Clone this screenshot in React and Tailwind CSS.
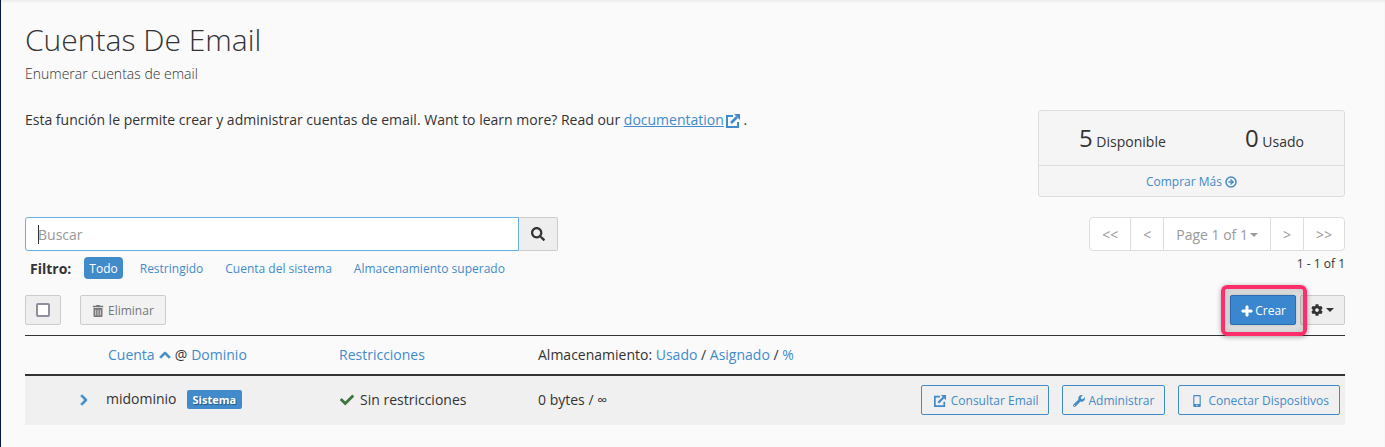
import React from 'react'
import {
  FaCheck,
  FaChevronRight,
  FaChevronUp,
  FaCog,
  FaMobileAlt,
  FaPlus,
  FaSearch,
  FaTrashAlt,
  FaWrench
} from 'react-icons/fa'
import { CircleArrowRight } from 'lucide-react'

const filters = ['Todo', 'Restringido', 'Cuenta del sistema', 'Almacenamiento superado']

const accounts = [
  { name: 'midominio', system: true, restrictions: 'Sin restricciones', used: '0 bytes', quota: '∞' }
]

function ExternalIcon({ className }) {
  return (
    <svg viewBox="0 0 14 14" className={className} fill="none" stroke="currentColor" strokeWidth="2" aria-hidden="true">
      <path d="M7 2H1V13H12V8" />
      <path d="M5 9L11 3" strokeWidth="2.6" />
      <path d="M8 0H14V6Z" fill="currentColor" stroke="none" />
    </svg>
  )
}

function Caret() {
  return (
    <svg viewBox="0 0 8 4" className="h-1 w-2" fill="currentColor" aria-hidden="true">
      <path d="M0 0H8L4 4Z" />
    </svg>
  )
}

/**
 * Available / used account counters
 */
function StatsBox() {
  return (
    <div className="w-[307px] shrink-0 rounded-[3px] border border-[#ddd] bg-[#f5f5f5]">
      <div className="flex h-[55px] items-center justify-between border-b border-[#ddd] px-10">
        <p><span className="text-2xl">5</span> Disponible</p>
        <p><span className="text-2xl">0</span> Usado</p>
      </div>
      <div className="flex h-[30px] items-center justify-center pt-px">
        <a href="#comprar" className="flex items-center gap-[3px] text-xs text-[#428bca]">
          Comprar Más
          <CircleArrowRight className="h-3 w-3" strokeWidth={3} />
        </a>
      </div>
    </div>
  )
}

function Pager() {
  return (
    <div className="flex flex-col items-end">
      <div className="flex h-[34px] divide-x divide-[#ddd] rounded-[4px] border border-[#ddd] bg-white text-[#999]">
        <button className="px-3 pt-0.5">&lt;&lt;</button>
        <button className="px-3 pt-0.5">&lt;</button>
        <button className="flex items-center gap-0.5 px-3 pt-0.5">
          Page 1 of 1
          <Caret />
        </button>
        <button className="px-3 pt-0.5">&gt;</button>
        <button className="px-3 pt-0.5">&gt;&gt;</button>
      </div>
      <p className="mt-[5px] text-xs leading-4">1 - 1 of 1</p>
    </div>
  )
}

function SearchBar() {
  return (
    <div className="w-[533px] max-w-full">
      <div className="relative flex h-[34px]">
        <input
          type="text"
          aria-label="Buscar"
          placeholder="Buscar"
          className="min-w-0 flex-1 rounded-l-[3px] border border-[#66afe9] bg-white px-3 pt-0.5 outline-none placeholder:text-[#999]"
        />
        {/* Text cursor */}
        <span className="absolute left-[13px] top-2 h-[19px] w-px bg-[#333]" />
        <button
          aria-label="Iniciar búsqueda"
          className="flex w-[39px] items-center justify-center rounded-r-[2px] border border-l-0 border-[#ccc] bg-[#eee]"
        >
          <FaSearch className="h-3.5 w-3.5" />
        </button>
      </div>
      <div className="mt-1.5 flex items-center pl-[5px]">
        <span className="mr-[13px] pt-0.5 font-bold">Filtro:</span>
        <div className="flex gap-3">
          {filters.map((filter, i) => (
            <button
              key={filter}
              className={
                i === 0
                  ? 'h-[22px] rounded-[4px] bg-[#428bca] px-[5px] pt-px text-xs text-white'
                  : 'h-[22px] px-[5px] pt-px text-xs text-[#428bca]'
              }
            >
              {filter}
            </button>
          ))}
        </div>
      </div>
    </div>
  )
}

function Toolbar() {
  return (
    <div className="mt-4 flex h-[30px] items-stretch">
      <label className="flex w-9 items-center justify-center rounded-[2px] border border-[#ccc] bg-[#eee]">
        <input
          type="checkbox"
          aria-label="Seleccionar todo"
          className="h-3.5 w-3.5 appearance-none rounded-[2px] border-2 border-[#8f8f9d] bg-white"
        />
      </label>
      <button className="ml-[19px] flex items-center gap-1 rounded-[2px] border border-[#ccc] bg-[#f2f2f2] px-[11px] pt-px text-xs text-[#777]">
        <FaTrashAlt className="h-3 w-3" />
        Eliminar
      </button>
      <div className="ml-auto flex gap-1">
        <div className="relative flex">
          {/* Highlight frame around the create button */}
          <div className="pointer-events-none absolute -bottom-[11px] -left-[9px] -right-[11px] -top-[10px] z-10 rounded-[6px] border-4 border-[#ff2d6b] shadow-[0_1px_5px_rgba(0,0,0,0.35),inset_0_0_6px_4px_rgba(0,0,0,0.18)]" />
          <button className="z-20 flex items-center gap-0.5 rounded-[2px] border border-[#2a6db0] bg-[#3a87cf] pl-2.5 pr-[9px] pt-px text-xs text-white shadow-[0_0_4px_rgba(0,0,0,0.3)]">
            <FaPlus className="h-3 w-3" stroke="currentColor" strokeWidth="30" />
            Crear
          </button>
        </div>
        <button
          aria-label="Configuración"
          className="flex w-[45px] items-center justify-center gap-[3px] rounded-[2px] border border-[#ccc] bg-[#eee]"
        >
          <FaCog className="h-3 w-3" />
          <Caret />
        </button>
      </div>
    </div>
  )
}

function ActionButton({ icon, children }) {
  return (
    <button className="flex h-[30px] items-center gap-[3px] rounded-[2px] border border-[#428bca] px-2.5 pt-px text-xs text-[#428bca]">
      {icon}
      {children}
    </button>
  )
}

function AccountsTable() {
  return (
    <table className="mt-2.5 w-full table-fixed border-t border-[#333] text-left">
      <colgroup>
        <col className="w-[78px]" />
        <col className="w-[231px]" />
        <col className="w-[199px]" />
        <col className="w-[320px]" />
        <col />
      </colgroup>
      <thead>
        <tr className="h-[39px] border-b-2 border-[#333]">
          <th />
          <th className="pl-[5px] font-normal">
            <div className="flex items-center gap-1">
              <a href="#cuenta" className="flex items-center gap-1 text-[#428bca]">
                Cuenta
                <FaChevronUp className="h-3 w-3" stroke="currentColor" strokeWidth="40" />
              </a>
              @
              <a href="#dominio" className="text-[#428bca]">Dominio</a>
            </div>
          </th>
          <th className="pl-[5px] font-normal">
            <a href="#restricciones" className="text-[#428bca]">Restricciones</a>
          </th>
          <th className="pl-[5px] font-normal">
            Almacenamiento: <a href="#usado" className="text-[#428bca]">Usado</a> /{' '}
            <a href="#asignado" className="text-[#428bca]">Asignado</a> /{' '}
            <a href="#porcentaje" className="text-[#428bca]">%</a>
          </th>
          <th />
        </tr>
      </thead>
      <tbody>
        {accounts.map(account => (
          <tr key={account.name} className="h-[50px] bg-[#f0f0f0]">
            <td>
              <button aria-label="Expandir" className="ml-[53px] flex text-[#428bca]">
                <FaChevronRight className="h-3 w-3" stroke="currentColor" strokeWidth="40" />
              </button>
            </td>
            <td className="pb-[3px] pl-[3px]">
              <div className="flex items-center gap-2.5">
                {account.name}
                {account.system && (
                  <span className="mt-0.5 rounded-[2px] bg-[#428bca] px-1.5 text-[11px] font-bold leading-[19px] text-white [text-shadow:1px_1px_1px_rgba(0,0,0,0.4)]">
                    Sistema
                  </span>
                )}
              </div>
            </td>
            <td className="pl-[5px]">
              <div className="flex items-center gap-[5px]">
                <FaCheck className="h-3.5 w-4 text-[#3c763d]" />
                {account.restrictions}
              </div>
            </td>
            <td className="pl-[5px]">{account.used} / {account.quota}</td>
            <td className="pr-[5px]">
              <div className="flex justify-end gap-[13px]">
                <ActionButton icon={<ExternalIcon className="mx-0.5 h-3 w-3" />}>Consultar Email</ActionButton>
                <ActionButton icon={<FaWrench className="h-3 w-3" />}>Administrar</ActionButton>
                <ActionButton icon={<FaMobileAlt className="h-3 w-4" />}>Conectar Dispositivos</ActionButton>
              </div>
            </td>
          </tr>
        ))}
      </tbody>
    </table>
  )
}

function App() {
  return (
    <main className="min-h-screen border-l border-[#0a1a44] bg-[#fafafa] pl-6 pr-10 pt-5 font-['Open_Sans','Noto_Sans',sans-serif] text-sm text-[#333] shadow-[inset_0_2px_2px_#eee]">
      <h1 className="text-3xl font-light leading-10">Cuentas De Email</h1>
      <p className="mt-1 font-light leading-5">Enumerar cuentas de email</p>

      <div className="mt-[26px] flex items-start justify-between">
        <p className="leading-5">
          Esta función le permite crear y administrar cuentas de email. Want to learn more? Read our{' '}
          <a href="#documentation" className="text-[#428bca]">
            <span className="underline">documentation</span>
            <ExternalIcon className="ml-0.5 inline h-3.5 w-3.5" />
          </a>{' '}
          .
        </p>
        <StatsBox />
      </div>

      <div className="mt-5 flex items-start justify-between">
        <SearchBar />
        <Pager />
      </div>

      <Toolbar />
      <AccountsTable />
    </main>
  )
}

export default App
